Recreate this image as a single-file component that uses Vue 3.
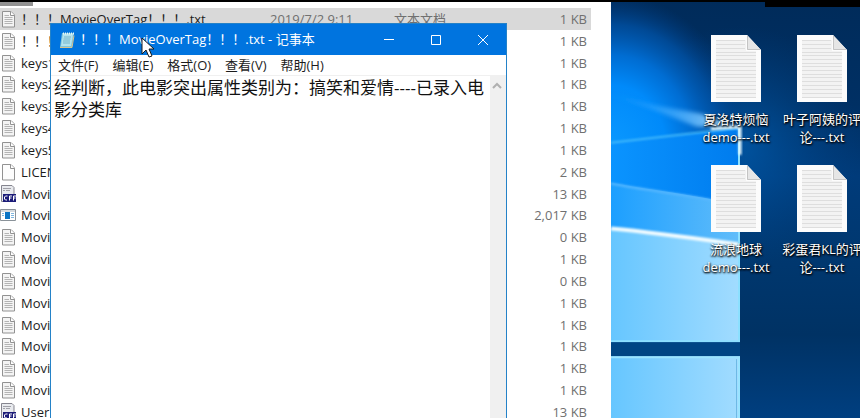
<script setup>
import { ref } from 'vue'

const files = [
  { name: '！！！MovieOverTag！！！.txt', date: '2019/7/2 9:11', type: '文本文档', size: '1 KB', icon: 'text', selected: true },
  { name: '！！！', size: '1 KB', icon: 'text' },
  { name: 'keys1', size: '1 KB', icon: 'text' },
  { name: 'keys2', size: '1 KB', icon: 'text' },
  { name: 'keys3', size: '1 KB', icon: 'text' },
  { name: 'keys4', size: '1 KB', icon: 'text' },
  { name: 'keys5', size: '1 KB', icon: 'text' },
  { name: 'LICENSE', size: '2 KB', icon: 'blank' },
  { name: 'Movie', size: '13 KB', icon: 'cff' },
  { name: 'Movie', size: '2,017 KB', icon: 'app' },
  { name: 'Movie', size: '0 KB', icon: 'text' },
  { name: 'Movie', size: '1 KB', icon: 'text' },
  { name: 'Movie', size: '0 KB', icon: 'text' },
  { name: 'Movie', size: '1 KB', icon: 'text' },
  { name: 'Movie', size: '1 KB', icon: 'text' },
  { name: 'Movie', size: '1 KB', icon: 'text' },
  { name: 'Movie', size: '1 KB', icon: 'text' },
  { name: 'Movie', size: '1 KB', icon: 'text' },
  { name: 'User', size: '13 KB', icon: 'cff' },
]

const menus = ['文件(F)', '编辑(E)', '格式(O)', '查看(V)', '帮助(H)']

const shortcuts = [
  ['夏洛特烦恼', 'demo---.txt'],
  ['叶子阿姨的评', '论---.txt'],
  ['流浪地球', 'demo---.txt'],
  ['彩蛋君KL的评', '论---.txt'],
]

const note = ref('经判断，此电影突出属性类别为：搞笑和爱情----已录入电影分类库')
</script>

<template>
  <div class="screen">
    <svg class="symbols" aria-hidden="true">
      <symbol id="icon-text" viewBox="0 0 16 18">
        <path d="M2.5 1.5h8.500l3.500 3.500v12h-12z" fill="#f4f4f4" stroke="#929292" />
        <path d="M10.500 1.500v4h4" fill="#fff" stroke="#929292" />
        <path d="M4.500 5.500h4.500M4.500 7.500h8M4.500 9.500h8M4.500 11.500h8M4.500 13.500h8" stroke="#b4b4b4" />
      </symbol>
      <symbol id="icon-blank" viewBox="0 0 16 18">
        <path d="M2.5 1.500h8.500l3.500 3.500v12h-12z" fill="#fdfdfd" stroke="#929292" />
        <path d="M10.500 1.500v4h4" fill="#fff" stroke="#929292" />
      </symbol>
      <symbol id="icon-cff" viewBox="0 0 16 18">
        <path d="M1.500 .5h10.500l2 2v14H1.500z" fill="#e8eaee" stroke="#85858f" />
        <path d="M3 3.500h8M3 5.500h2M6 5.500h4" stroke="#a0a0a8" />
        <path d="M3 9h13v8H3z" fill="#1b1b78" />
        <path d="M7.500 11h-2l-1 1v2l1 1h1.500M9.500 15.500v-4.500h2.500M9.500 13h2M13.500 15.500v-4.500h2.500M13.500 13h2" fill="none" stroke="#fff" />
      </symbol>
      <symbol id="icon-app" viewBox="0 0 16 18">
        <path d="M.5 3.500h15v11H.5z" fill="#fff" stroke="#8a9299" />
        <path d="M1 4h14v2H1z" fill="#d5dade" />
        <path d="M5 6h5v7H5z" fill="#0873c4" />
        <path d="M2 7.500h2M2 9.500h2M11 7.500h3M11 9.500h3M11 11.500h3" stroke="#7eb6df" />
      </symbol>
      <symbol id="icon-document" viewBox="0 0 50 67">
        <path d="M0 0h36l14 15v52H0z" fill="#fcfcfc" />
        <path d="M5 5h30v11h10v47H5z" fill="#f3f3f3" />
        <path d="M5 5.500h29M5 9.500h29M5 13.500h29M5 17.500h40M5 20.500h40M5 24.500h40M5 28.500h40M5 31.500h40M5 35.500h40M5 39.500h40M5 42.500h40M5 46.500h40M5 50.500h40M5 54.500h40M5 58.500h40M5 62.500h40" stroke="#dedede" />
        <path d="M36 0l14 15H36z" fill="#e6e6e6" />
        <path d="M36.500 1v13.500H49" fill="none" stroke="#c4c4c4" />
      </symbol>
    </svg>

    <main class="explorer">
      <div class="scroll-strip"><span class="scroll-thumb"></span></div>
      <table class="files">
        <colgroup>
          <col />
          <col class="col-date" />
          <col class="col-type" />
          <col class="col-size" />
        </colgroup>
        <tbody>
          <tr v-for="(file, index) in files" :key="index" :class="{ selected: file.selected }">
            <td>
              <span class="file-name">
                <svg class="file-icon" aria-hidden="true"><use :href="`#icon-${file.icon}`" /></svg>
                {{ file.name }}
              </span>
            </td>
            <td class="detail">{{ file.date }}</td>
            <td class="detail">{{ file.type }}</td>
            <td class="detail size">{{ file.size }}</td>
          </tr>
        </tbody>
      </table>
    </main>

    <section class="desktop">
      <svg class="wallpaper" viewBox="0 0 249 418" preserveAspectRatio="none" aria-hidden="true">
        <defs>
          <linearGradient id="night" x1="0" y1="0" x2="0" y2="1">
            <stop offset="0" stop-color="#002b5a" />
            <stop offset=".25" stop-color="#003064" />
            <stop offset=".42" stop-color="#003b7a" />
            <stop offset=".6" stop-color="#003870" />
            <stop offset=".8" stop-color="#003264" />
            <stop offset="1" stop-color="#003f80" />
          </linearGradient>
          <radialGradient id="halo" gradientUnits="userSpaceOnUse" cx="129" cy="145" r="120">
            <stop offset="0" stop-color="#0060b4" stop-opacity=".7" />
            <stop offset="1" stop-color="#004890" stop-opacity="0" />
          </radialGradient>
          <radialGradient id="glow" gradientUnits="userSpaceOnUse" cx="0" cy="0" r="1" gradientTransform="translate(0 145) scale(136 152)">
            <stop offset="0" stop-color="#0a98ff" />
            <stop offset=".4" stop-color="#008afa" />
            <stop offset=".6" stop-color="#0070d8" stop-opacity=".95" />
            <stop offset=".8" stop-color="#0056ae" stop-opacity=".7" />
            <stop offset="1" stop-color="#003f88" stop-opacity="0" />
          </radialGradient>
          <linearGradient id="beam" x1="0" y1="0" x2="1" y2="0">
            <stop offset="0" stop-color="#22a0ff" stop-opacity=".3" />
            <stop offset=".5" stop-color="#4ab0ff" stop-opacity=".7" />
            <stop offset="1" stop-color="#b4e0ff" />
          </linearGradient>
          <linearGradient id="pane-top" x1="0" y1="0" x2="1" y2="0">
            <stop offset="0" stop-color="#0a94ff" />
            <stop offset="1" stop-color="#007cee" />
          </linearGradient>
          <linearGradient id="pane-mid" x1="0" y1="0" x2="1" y2="0">
            <stop offset="0" stop-color="#1c9fff" />
            <stop offset="1" stop-color="#62bdfa" />
          </linearGradient>
          <linearGradient id="pane-light" x1="0" y1="0" x2="1" y2="0">
            <stop offset="0" stop-color="#66c6ff" />
            <stop offset="1" stop-color="#a2dcff" />
          </linearGradient>
          <filter id="soft" x="-10%" y="-40%" width="120%" height="180%"><feGaussianBlur stdDeviation="1" /></filter>
          <filter id="wide" x="-20%" y="-40%" width="140%" height="180%"><feGaussianBlur stdDeviation="2" /></filter>
        </defs>
        <path d="M0 0h249v418H0z" fill="url(#night)" />
        <path d="M0 0h249v418H0z" fill="url(#halo)" />
        <path d="M0 0h249v342H0z" fill="url(#glow)" />
        <path d="M0 94l40 10 50 9 36 13-40 0-46-18z" fill="url(#beam)" filter="url(#wide)" />
        <path d="M0 143l129-16v215H0z" fill="url(#pane-top)" />
        <path d="M0 182c40 8 84 12 129 23v43H0z" fill="url(#pane-mid)" />
        <path d="M0 228c45 4 86 10 129 16v98H0z" fill="url(#pane-light)" />
        <path d="M0 183c40 8 84 12 128 22" fill="none" stroke="#58b8ff" stroke-width="2" filter="url(#soft)" />
        <path d="M0 228c45 4 86 10 128 16" fill="none" stroke="#f2fcff" stroke-width="4" filter="url(#soft)" />
        <path d="M0 142l129-15" stroke="#42b8fb" stroke-width="2" filter="url(#soft)" />
        <path d="M128 127v214H0" fill="none" stroke="#8ce0ff" stroke-width="2" />
        <path d="M100 128l29-2v28" fill="none" stroke="#e8faff" stroke-width="3" filter="url(#soft)" />
        <path d="M0 342h129v14H0z" fill="#004584" />
        <path d="M0 356h129v62H0z" fill="url(#pane-light)" />
        <path d="M0 357h128v61" fill="none" stroke="#9ae4ff" stroke-width="2" />
        <path d="M125.500 359v59" stroke="#6db9e5" />
        <path d="M154 0h95v6h-95z" fill="#000" />
      </svg>
      <ul class="shortcuts">
        <li v-for="(lines, index) in shortcuts" :key="index" class="shortcut">
          <svg class="document" aria-hidden="true"><use href="#icon-document" /></svg>
          <span v-for="line in lines" :key="line">{{ line }}</span>
        </li>
      </ul>
    </section>

    <section class="notepad" aria-label="记事本">
      <header class="titlebar">
        <svg class="notepad-icon" viewBox="0 0 16 18" aria-hidden="true">
          <path d="M3 2h12l-2 14H1z" fill="#7fc5dc" />
          <path d="M4 3h10l-2 12H2z" fill="#b4e3ee" />
          <path d="M5 6h7M4.500 8h7M4 10h7M4 12h7" stroke="#74b5cb" />
          <path d="M4 2.500h11" stroke="#e9f7fa" stroke-width="2" stroke-dasharray="1 1" />
          <path d="M1 16.500h12l2-12" fill="none" stroke="#d9c48c" />
        </svg>
        <h1 class="title">！！！MovieOverTag！！！.txt - 记事本</h1>
        <button class="window-button" type="button" aria-label="最小化">
          <svg viewBox="0 0 12 12"><path d="M1 5.500h10" /></svg>
        </button>
        <button class="window-button" type="button" aria-label="最大化">
          <svg viewBox="0 0 12 12"><path d="M1.500 1.500h9v9h-9z" /></svg>
        </button>
        <button class="window-button" type="button" aria-label="关闭">
          <svg viewBox="0 0 12 12"><path d="M1 1l10 10M11 1L1 11" /></svg>
        </button>
      </header>
      <nav class="menubar">
        <button v-for="menu in menus" :key="menu" class="menu" type="button">{{ menu }}</button>
      </nav>
      <div class="editor">
        <textarea v-model="note" class="note" aria-label="文本编辑器" spellcheck="false"></textarea>
        <div class="scrollbar">
          <button class="scroll-up" type="button" aria-label="向上滚动">
            <svg viewBox="0 0 10 8"><path d="M1 6l4-4 4 4" /></svg>
          </button>
        </div>
      </div>
    </section>

    <svg class="pointer" viewBox="0 0 14 22" aria-hidden="true">
      <path d="M1 1v16l4-4 3 7 3-1-3-7h5z" fill="#fff" stroke="#1a1a1a" />
    </svg>
  </div>
</template>

<style>
body {
  margin: 0;
  overflow: hidden;
}
</style>

<style scoped>
.screen {
  position: relative;
  display: flex;
  height: 100vh;
  box-sizing: border-box;
  border-top: 2px solid #000;
  overflow: hidden;
  background: #fff;
  font-family: "Open Sans", "Noto Sans CJK SC", sans-serif;
  font-size: 13px;
  line-height: 18px;
  color: #1c1c1c;
}

.symbols {
  position: absolute;
  width: 0;
  height: 0;
}

.explorer {
  flex: 1;
  min-width: 0;
  overflow: hidden;
}

.scroll-strip {
  display: flex;
  height: 6px;
}

.scroll-thumb {
  width: 33px;
  height: 4px;
  background: #929292;
}

.files {
  width: calc(100% - 20px);
  height: calc(100vh - 3px);
  table-layout: fixed;
  border-collapse: collapse;
}

.col-date {
  width: 124px;
}

.col-type {
  width: 100px;
}

.col-size {
  width: 97px;
}

.files td {
  padding: 0;
  white-space: nowrap;
}

.selected {
  background: #d9d9d9;
}

.file-name {
  display: flex;
  align-items: center;
  gap: 5px;
}

.file-icon {
  flex: none;
  width: 16px;
  height: 18px;
}

.files .detail {
  color: #707070;
}

.files .size {
  padding-right: 4px;
  text-align: right;
}

.desktop {
  position: relative;
  width: 249px;
  margin-top: -1px;
  overflow: hidden;
}

.wallpaper {
  position: absolute;
  inset: 0;
  width: 100%;
  height: 100%;
}

.shortcuts {
  position: relative;
  display: grid;
  grid-template-columns: 86px 86px;
  grid-auto-rows: 130px;
  margin: 0;
  padding: 34px 0 0 82px;
  list-style: none;
}

.shortcut {
  display: flex;
  flex-direction: column;
  align-items: center;
  color: #fff;
  text-shadow: 0 1px 2px #000, 1px 1px 2px #000;
  white-space: nowrap;
}

.document {
  width: 50px;
  height: 67px;
  margin-bottom: 8px;
}

.notepad {
  position: absolute;
  top: 21px;
  bottom: -8px;
  left: 50px;
  width: 455px;
  display: flex;
  flex-direction: column;
  border: 1px solid #2482c8;
  background: #fff;
}

.titlebar {
  display: flex;
  align-items: center;
  height: 31px;
  padding-left: 8px;
  background: #0074df;
  color: #fff;
}

.notepad-icon {
  width: 16px;
  height: 18px;
  margin-right: 5px;
}

.title {
  flex: 1;
  margin: 0;
  font-size: 13px;
  font-weight: 400;
  line-height: 16px;
  padding-bottom: 2px;
  white-space: nowrap;
}

.window-button {
  display: grid;
  place-items: center;
  width: 47px;
  height: 30px;
  padding: 0;
  border: 0;
  background: none;
}

.window-button svg {
  width: 12px;
  height: 12px;
  fill: none;
  stroke: #fff;
}

.menubar {
  display: flex;
  gap: 14px;
  height: 20px;
  padding-left: 7px;
  border-bottom: 1px solid #f0f0f0;
}

.menu {
  padding: 0;
  border: 0;
  background: none;
  color: inherit;
  font: inherit;
}

.editor {
  display: flex;
  flex: 1;
}

.note {
  flex: 1;
  min-width: 0;
  padding: 1px 0 0 3px;
  border: 0;
  outline: 0;
  resize: none;
  overflow: hidden;
  background: #fff;
  color: #111;
  font-family: inherit;
  font-size: 17px;
  line-height: 22px;
}

.scrollbar {
  width: 16px;
  background: #f0f0f0;
}

.scroll-up {
  display: grid;
  place-items: center;
  width: 14px;
  height: 20px;
  padding: 0;
  border: 0;
  background: none;
}

.scroll-up svg {
  width: 10px;
  height: 8px;
  fill: none;
  stroke: #b0b0b0;
  stroke-width: 2;
}

.pointer {
  position: absolute;
  top: 35px;
  left: 141px;
  width: 14px;
  height: 22px;
}
</style>
